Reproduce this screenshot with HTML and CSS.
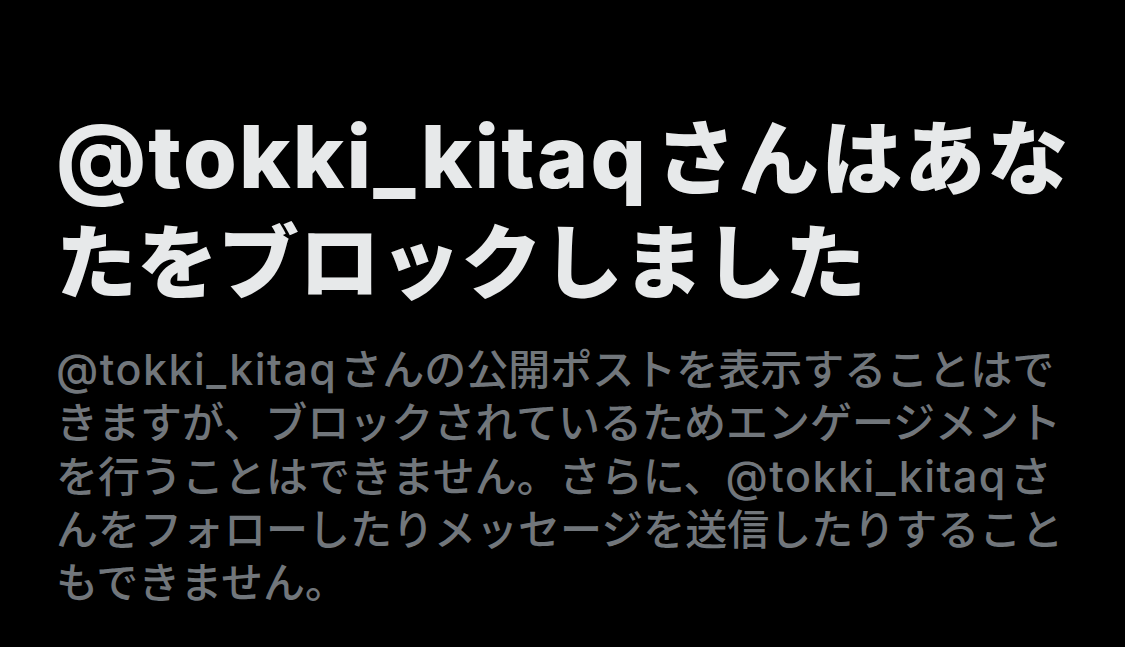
FILE: index.html
```html
<!DOCTYPE html>
<html lang="ja">
<head>
    <meta charset="UTF-8">
    <meta name="viewport" content="width=device-width, initial-scale=1.0">
    <title>ブロックされています</title>
    <link rel="stylesheet" href="styles.css">
</head>
<body>
    <div class="blocked">
        <h1 class="blocked-title"><span class="handle">@tokki_kitaq</span> <span class="lead">さんはあな</span><br>たをブロックしました</h1>
        <p class="blocked-text"><span class="handle">@tokki_kitaq</span> さんの公開ポストを表示することはで<br>きますが、ブロックされているためエンゲージメント<br>を行うことはできません。さらに、<span class="handle">@tokki_kitaq</span> さ<br>んをフォローしたりメッセージを送信したりすること<br>もできません。</p>
    </div>
</body>
</html>
```

FILE: styles.css
```css
html, body {
    margin: 0;
    padding: 0;
    background-color: #000;
}
body {
    font-family: Inter, "Noto Sans CJK JP", sans-serif;
    width: 1125px;
    height: 647px;
    overflow: hidden;
}
.blocked {
    padding: 105px 40px 0 56px;
}
.blocked-title {
    margin: 0;
    color: #e7e9ea;
    font-size: 81px;
    font-weight: 800;
    line-height: 104px;
    white-space: nowrap;
    word-spacing: -0.13em;
}
.blocked-title .handle {
    font-size: 87px;
    font-weight: 800;
    letter-spacing: 2.2px;
}
.blocked-title .lead {
    letter-spacing: 2px;
}
.blocked-text {
    margin: 28px 0 0;
    color: #71767b;
    font-size: 42px;
    font-weight: 500;
    line-height: 53.3px;
    white-space: nowrap;
    word-spacing: -0.2em;
}
.blocked-text .handle {
    font-size: 43px;
    letter-spacing: 1.5px;
}
```
